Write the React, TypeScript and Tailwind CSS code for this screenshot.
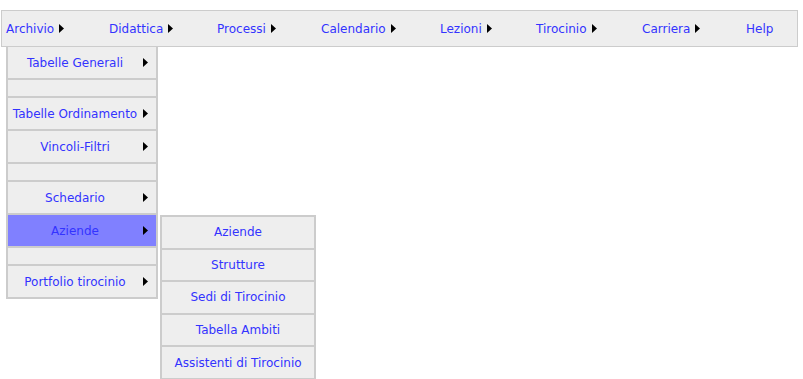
import React from "react";

const Arrow = () => (
  <svg width="5" height="9" viewBox="0 0 5 9" className="inline-block">
    <path d="M0 0 L5 4.5 L0 9 Z" fill="#000" />
  </svg>
);

const topItems = [
  { label: "Archivio", w: "w-[103px]", arrow: true },
  { label: "Didattica", w: "w-[108px]", arrow: true },
  { label: "Processi", w: "w-[104px]", arrow: true },
  { label: "Calendario", w: "w-[119px]", arrow: true },
  { label: "Lezioni", w: "w-[96px]", arrow: true },
  { label: "Tirocinio", w: "w-[106px]", arrow: true },
  { label: "Carriera", w: "w-[104px]", arrow: true },
  { label: "Help", w: "w-[50px]", arrow: false },
];

const archivio = [
  { label: "Tabelle Generali" },
  { label: "" },
  { label: "Tabelle Ordinamento" },
  { label: "Vincoli-Filtri" },
  { label: "" },
  { label: "Schedario" },
  { label: "Aziende", active: true },
  { label: "" },
  { label: "Portfolio tirocinio" },
];

const aziende = ["Aziende", "Strutture", "Sedi di Tirocinio", "Tabella Ambiti", "Assistenti di Tirocinio"];

export default function App() {
  return (
    <div className="relative w-[803px] h-[379px] bg-white overflow-hidden text-[12px] text-[#3333ff] font-['DejaVu_Sans',Verdana,sans-serif]">
      <div className="pt-[10px] pl-[1px]">
        {/* Top bar */}
        <div className="w-[797px] h-[37px] border border-[#cccccc] bg-[#eeeeee] flex items-center pl-[4px]">
          {topItems.map((t) => (
            <div key={t.label} className={`${t.w} flex items-center gap-[5px] shrink-0`}>
              <span>{t.label}</span>
              {t.arrow && <Arrow />}
            </div>
          ))}
        </div>
      </div>

      {/* Archivio dropdown */}
      <div className="absolute left-[6px] top-[46px] w-[152px] border-x border-b border-[#cccccc]">
        {archivio.map((it, i) =>
          it.label === "" ? (
            <div key={i} className="h-[18px] border border-[#cccccc] bg-[#eeeeee]" />
          ) : (
            <div
              key={i}
              className={`relative h-[33px] border border-[#cccccc] flex items-center justify-center pr-[14px] ${
                it.active ? "bg-[#8080ff]" : "bg-[#eeeeee]"
              }`}
            >
              <span className="whitespace-nowrap">{it.label}</span>
              <span className="absolute right-[8px] top-[11px] flex">
                <Arrow />
              </span>
            </div>
          )
        )}
      </div>

      {/* Aziende submenu */}
      <div className="absolute left-[160px] top-[215px] w-[156px] border border-[#cccccc]">
        {aziende.map((a) => (
          <div key={a} className="h-[32.6px] border border-[#cccccc] bg-[#eeeeee] flex items-center justify-center">
            <span className="whitespace-nowrap">{a}</span>
          </div>
        ))}
      </div>
    </div>
  );
}
